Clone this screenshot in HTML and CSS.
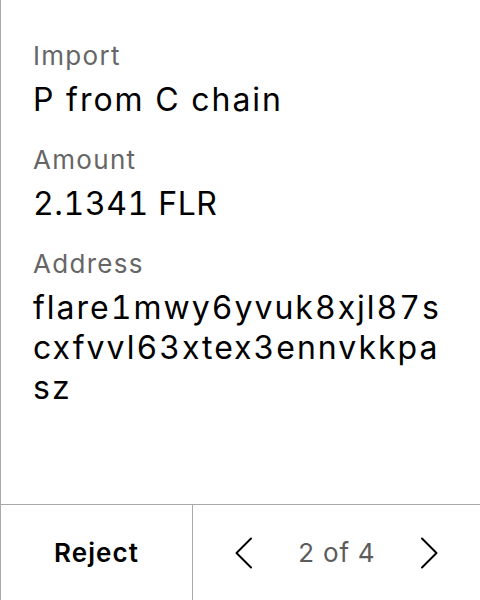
FILE: index.html
```html
<!DOCTYPE html>
<html lang="en">
<head>
<meta charset="utf-8">
<title>Review transaction</title>
<link rel="stylesheet" href="styles.css">
</head>
<body>
<div class="screen">
  <main class="details">
    <div class="field">
      <div class="label">Import</div>
      <div class="value">P from C chain</div>
    </div>
    <div class="field">
      <div class="label">Amount</div>
      <div class="value value-amount">2.1341 FLR</div>
    </div>
    <div class="field">
      <div class="label">Address</div>
      <div class="value value-wrap">flare1mwy6yvuk8xjl87scxfvvl63xtex3ennvkkpasz</div>
    </div>
  </main>
  <footer class="footer">
    <button class="reject" type="button">Reject</button>
    <div class="pager">
      <svg class="chev" width="20" height="32" viewBox="0 0 20 32" aria-hidden="true">
        <path d="M17 1.5 L2.5 16 L17 30.5" fill="none" stroke="#000" stroke-width="2" stroke-linecap="round" stroke-linejoin="round"/>
      </svg>
      <span class="count">2 of 4</span>
      <svg class="chev" width="20" height="32" viewBox="0 0 20 32" aria-hidden="true">
        <path d="M3 1.5 L17.5 16 L3 30.5" fill="none" stroke="#000" stroke-width="2" stroke-linecap="round" stroke-linejoin="round"/>
      </svg>
    </div>
  </footer>
</div>
</body>
</html>
```

FILE: styles.css
```css
* {
  box-sizing: border-box;
}

html, body {
  margin: 0;
  padding: 0;
  background: #fff;
}

body {
  font-family: "Inter", "Liberation Sans", sans-serif;
  font-feature-settings: "tnum" 1;
  color: #000;
}

.screen {
  width: 480px;
  height: 600px;
  border-left: 1px solid #a9a9a9;
  display: flex;
  flex-direction: column;
}

.details {
  flex: 1;
  padding: 40px 32px 0 32px;
  display: flex;
  flex-direction: column;
  gap: 24px;
}

.field {
  display: flex;
  flex-direction: column;
  gap: 8px;
}

.label {
  font-size: 26px;
  line-height: 32px;
  letter-spacing: 1.3px;
  color: #666;
}

.value {
  font-size: 32px;
  line-height: 40px;
  letter-spacing: 2px;
  color: #000;
}

.value-amount {
  letter-spacing: 0.6px;
}

.value-wrap {
  word-break: break-all;
}

.footer {
  height: 96px;
  border-top: 1px solid #a9a9a9;
  display: grid;
  grid-template-columns: 192px 1fr;
}

.reject {
  border: 0;
  border-right: 1px solid #a9a9a9;
  background: transparent;
  font-family: inherit;
  font-size: 26px;
  font-weight: 600;
  letter-spacing: 1.1px;
  color: #000;
  padding: 0;
  margin: 0;
}

.pager {
  display: flex;
  align-items: center;
  justify-content: space-between;
  padding: 0 41px;
}

.chev {
  display: block;
}

.count {
  font-size: 26px;
  letter-spacing: 0.8px;
  color: #5c5c5c;
}
```
